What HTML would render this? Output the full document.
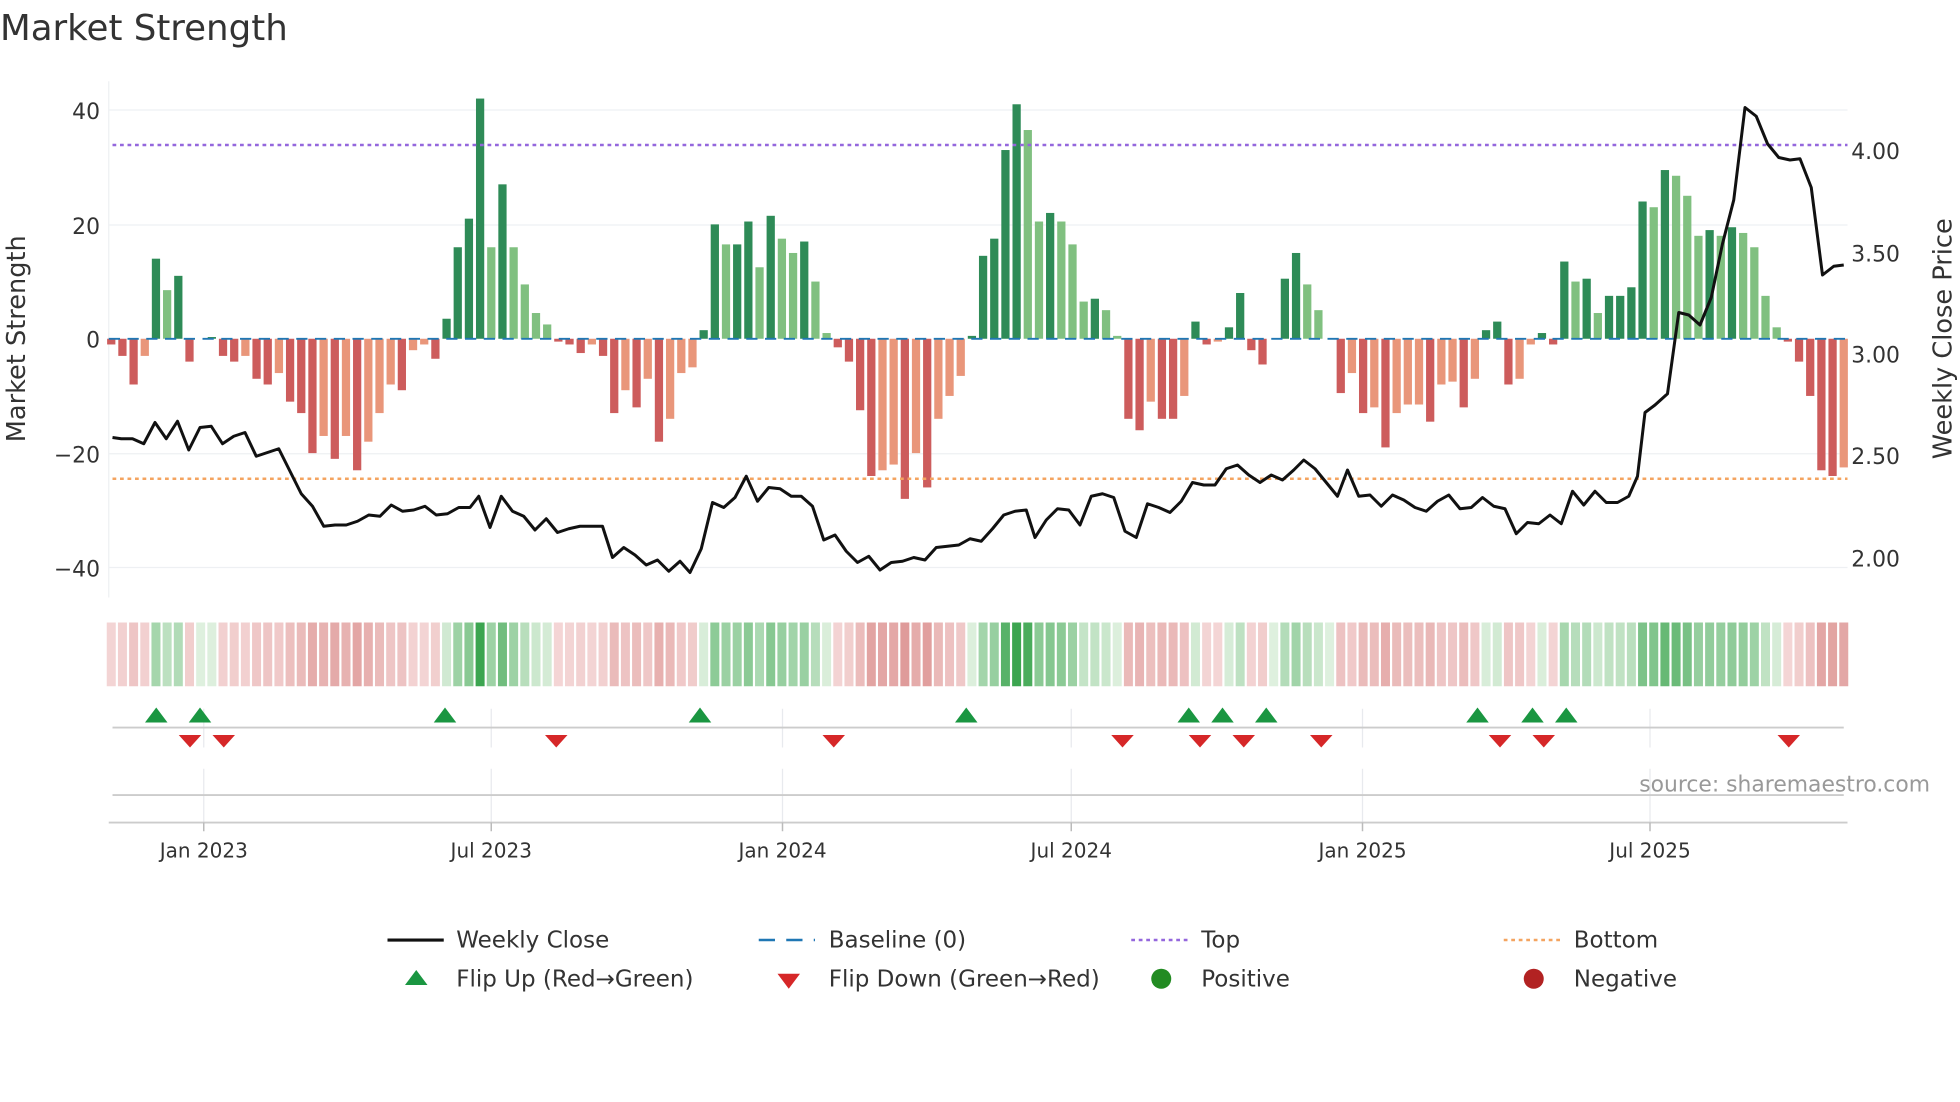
<!DOCTYPE html>
<html><head><meta charset="utf-8"><style>
html,body{margin:0;padding:0;background:#fff;}
svg{display:block;font-family:"DejaVu Sans","Liberation Sans",sans-serif;}
</style></head><body>
<svg id="s" width="1960" height="1102" viewBox="0 0 1568 881.6" xmlns="http://www.w3.org/2000/svg">
<text x="0" y="32" font-size="28.5" fill="#333">Market Strength</text>
<g stroke="#eef0f3" stroke-width="1">
<line x1="87" y1="88" x2="1478" y2="88"/><line x1="87" y1="180" x2="1478" y2="180"/>
<line x1="87" y1="363" x2="1478" y2="363"/><line x1="87" y1="454" x2="1478" y2="454"/>
<line x1="87" y1="65" x2="87" y2="478"/>
</g>
<g font-size="17.5" fill="#333" text-anchor="end">
<text x="80" y="95">40</text><text x="80" y="187">20</text><text x="80" y="278">0</text>
<text x="80" y="370">−20</text><text x="80" y="461">−40</text>
</g>
<g font-size="17.5" fill="#333">
<text x="1481" y="127">4.00</text><text x="1481" y="209">3.50</text><text x="1481" y="290">3.00</text>
<text x="1481" y="371">2.50</text><text x="1481" y="453">2.00</text>
</g>
<text transform="translate(20,271) rotate(-90)" font-size="20.5" fill="#333" text-anchor="middle">Market Strength</text>
<text transform="translate(1561,271) rotate(-90)" font-size="20.5" fill="#333" text-anchor="middle">Weekly Close Price</text>
<g id="bars"></g>
<line x1="87" y1="271" x2="1478" y2="271" stroke="#1f77b4" stroke-width="1.5" stroke-dasharray="9,6"/>
<line x1="90" y1="116" x2="1478" y2="116" stroke="#9467dd" stroke-width="2" stroke-dasharray="3,3"/>
<line x1="90" y1="383" x2="1478" y2="383" stroke="#f4a460" stroke-width="2" stroke-dasharray="3,3"/>
<polyline id="price" fill="none" stroke="#111" stroke-width="2.4" stroke-linejoin="round"/>
<g id="heat"></g>
<g stroke="#e8eaee" stroke-width="1">
<line x1="163" y1="567" x2="163" y2="598"/><line x1="393" y1="567" x2="393" y2="598"/><line x1="626" y1="567" x2="626" y2="598"/><line x1="857" y1="567" x2="857" y2="598"/><line x1="1090" y1="567" x2="1090" y2="598"/><line x1="1320" y1="567" x2="1320" y2="598"/>
<line x1="163" y1="615" x2="163" y2="658"/><line x1="393" y1="615" x2="393" y2="658"/><line x1="626" y1="615" x2="626" y2="658"/><line x1="857" y1="615" x2="857" y2="658"/><line x1="1090" y1="615" x2="1090" y2="658"/><line x1="1320" y1="615" x2="1320" y2="658"/>
</g>
<line x1="90" y1="582" x2="1475" y2="582" stroke="#ccc" stroke-width="1.5"/>
<line x1="90" y1="636" x2="1475" y2="636" stroke="#ccc" stroke-width="1.5"/>
<line x1="87" y1="658" x2="1478" y2="658" stroke="#ccc" stroke-width="1.5"/>
<g stroke="#bbb" stroke-width="1.2">
<line x1="163" y1="658" x2="163" y2="665"/><line x1="393" y1="658" x2="393" y2="665"/><line x1="626" y1="658" x2="626" y2="665"/><line x1="857" y1="658" x2="857" y2="665"/><line x1="1090" y1="658" x2="1090" y2="665"/><line x1="1320" y1="658" x2="1320" y2="665"/>
</g>
<g id="mk"></g>
<g font-size="16" fill="#333" text-anchor="middle">
<text x="163" y="686">Jan 2023</text><text x="393" y="686">Jul 2023</text><text x="626" y="686">Jan 2024</text>
<text x="857" y="686">Jul 2024</text><text x="1090" y="686">Jan 2025</text><text x="1320" y="686">Jul 2025</text>
</g>
<text x="1544" y="633" font-size="17.5" fill="#999" text-anchor="end">source: sharemaestro.com</text>
<g font-size="18.4" fill="#333">
<line x1="310" y1="752" x2="355" y2="752" stroke="#111" stroke-width="2.5"/><text x="365" y="758">Weekly Close</text>
<line x1="607" y1="752" x2="652" y2="752" stroke="#1f77b4" stroke-width="2" stroke-dasharray="13,9"/><text x="663" y="758">Baseline (0)</text>
<line x1="905" y1="752" x2="950" y2="752" stroke="#9467dd" stroke-width="2" stroke-dasharray="3,3"/><text x="961" y="758">Top</text>
<line x1="1203" y1="752" x2="1248" y2="752" stroke="#f4a460" stroke-width="2" stroke-dasharray="3,3"/><text x="1259" y="758">Bottom</text>
<polygon points="324,788 342,788 333,776" fill="#1a9641"/><text x="365" y="789">Flip Up (Red→Green)</text>
<polygon points="622,779 640,779 631,791" fill="#d62728"/><text x="663" y="789">Flip Down (Green→Red)</text>
<circle cx="929" cy="783" r="8" fill="#228b22"/><text x="961" y="789">Positive</text>
<circle cx="1227" cy="783" r="8" fill="#b22222"/><text x="1259" y="789">Negative</text>
</g>
</svg>
<script>
var NS="http://www.w3.org/2000/svg";
function el(t,a,p){var e=document.createElementNS(NS,t);for(var k in a)e.setAttribute(k,a[k]);document.getElementById(p).appendChild(e);return e;}
var d=[[-1,0],[-3,0],[-8,0],[-3,1],[14,0],[8.5,1],[11,0],[-4,0],[0,0],[0.3,0],[-3,0],[-4,0],[-3,1],[-7,0],[-8,0],[-6,1],[-11,0],[-13,0],[-20,0],[-17,1],[-21,0],[-17,1],[-23,0],[-18,1],[-13,1],[-8,1],[-9,0],[-2,1],[-1,1],[-3.5,0],[3.5,0],[16,0],[21,0],[42,0],[16,1],[27,0],[16,1],[9.5,1],[4.5,1],[2.5,1],[-0.5,0],[-1,0],[-2.5,0],[-1,1],[-3,0],[-13,0],[-9,1],[-12,0],[-7,1],[-18,0],[-14,1],[-6,1],[-5,1],[1.5,0],[20,0],[16.5,1],[16.5,0],[20.5,0],[12.5,1],[21.5,0],[17.5,1],[15,1],[17,0],[10,1],[1,1],[-1.5,0],[-4,0],[-12.5,0],[-24,0],[-23,1],[-22,1],[-28,0],[-20,1],[-26,0],[-14,1],[-10,1],[-6.5,1],[0.5,0],[14.5,0],[17.5,0],[33,0],[41,0],[36.5,1],[20.5,1],[22,0],[20.5,1],[16.5,1],[6.5,1],[7,0],[5,1],[0.5,1],[-14,0],[-16,0],[-11,1],[-14,0],[-14,0],[-10,1],[3,0],[-1,0],[-0.5,1],[2,0],[8,0],[-2,0],[-4.5,0],[0,0],[10.5,0],[15,0],[9.5,1],[5,1],[0,0],[-9.5,0],[-6,1],[-13,0],[-12,1],[-19,0],[-13,1],[-11.5,1],[-11.5,1],[-14.5,0],[-8,1],[-7.5,1],[-12,0],[-7,1],[1.5,0],[3,0],[-8,0],[-7,1],[-1,1],[1,0],[-1,0],[13.5,0],[10,1],[10.5,0],[4.5,1],[7.5,0],[7.5,0],[9,0],[24,0],[23,1],[29.5,0],[28.5,1],[25,1],[18,1],[19,0],[18,1],[19.5,0],[18.5,1],[16,1],[7.5,1],[2,1],[-0.5,0],[-4,0],[-10,0],[-23,0],[-24,0],[-22.5,1]];
var N=d.length,x0=89,x1=1475,st=(x1-x0)/(N-1);
d.forEach(function(v,i){var x=x0+i*st,h=Math.abs(v[0])*4.575,y=v[0]>=0?271-h:271;
var c=v[0]>=0?(v[1]?"#80c080":"#2e8b57"):(v[1]?"#e9967a":"#cd5c5c");
if(h>0.3)el("rect",{x:x-3.3,y:y,width:6.6,height:h,fill:c},"bars");
var a=Math.min(1,Math.abs(v[0])/40),hc;
if(v[0]>=0){hc="rgb("+Math.round(222-(222-60)*a)+","+Math.round(240-(240-165)*a)+","+Math.round(222-(222-80)*a)+")";}
else{hc="rgb("+Math.round(244-(244-214)*a)+","+Math.round(214-(214-130)*a)+","+Math.round(214-(214-128)*a)+")";}
el("rect",{x:x-3.6,y:498,width:7.2,height:51,fill:hc},"heat");});
var p=[90,350,97,351,106,351,115,355,124,338,133,351,142,337,151,360,160,342,169,341,178,355,187,349,196,346,205,365,214,362,223,359,232,377,241,395,250,405,259,421,268,420,277,420,286,417,295,412,304,413,313,404,322,409,331,408,340,405,349,412,358,411,367,406,376,406,383,397,392,422,401,397,410,409,419,413,428,424,437,415,446,426,455,423,464,421,473,421,482,421,490,446,499,438,508,444,517,452,526,448,535,457,544,449,552,458,561,439,570,402,579,406,588,398,597,381,606,401,615,390,624,391,633,397,641,397,650,405,659,432,668,428,677,441,686,450,695,445,704,456,713,450,722,449,731,446,740,448,749,438,758,437,767,436,776,431,785,433,794,423,803,412,812,409,821,408,828,430,837,416,846,407,855,408,864,420,873,397,882,395,891,398,900,425,909,430,918,403,927,406,936,410,945,401,954,386,963,388,972,388,981,375,990,372,999,380,1008,386,1017,380,1026,384,1035,376,1043,368,1052,375,1061,386,1070,397,1078,376,1087,397,1096,396,1105,405,1114,396,1123,400,1132,406,1141,409,1150,401,1159,396,1168,407,1177,406,1186,398,1195,405,1204,407,1213,427,1222,418,1231,419,1240,412,1249,419,1258,393,1267,404,1276,393,1285,402,1294,402,1303,397,1310,381,1316,330,1324,324,1334,315,1343,250,1351,252,1360,260,1369,238,1378,195,1387,160,1396,86,1405,93,1414,115,1423,126,1432,128,1440,127,1449,150,1458,220,1467,213,1475,212];
var s="";for(var i=0;i<p.length;i+=2)s+=p[i]+","+p[i+1]+" ";document.getElementById("price").setAttribute("points",s);
[125,160,356,560,773,951,978,1013,1182,1226,1253].forEach(function(x){el("polygon",{points:(x-9)+",578 "+(x+9)+",578 "+x+",566",fill:"#1a9641"},"mk");});
[152,179,445,667,898,960,995,1057,1200,1235,1431].forEach(function(x){el("polygon",{points:(x-9)+",588 "+(x+9)+",588 "+x+",598",fill:"#d62728"},"mk");});
</script>
</body></html>
